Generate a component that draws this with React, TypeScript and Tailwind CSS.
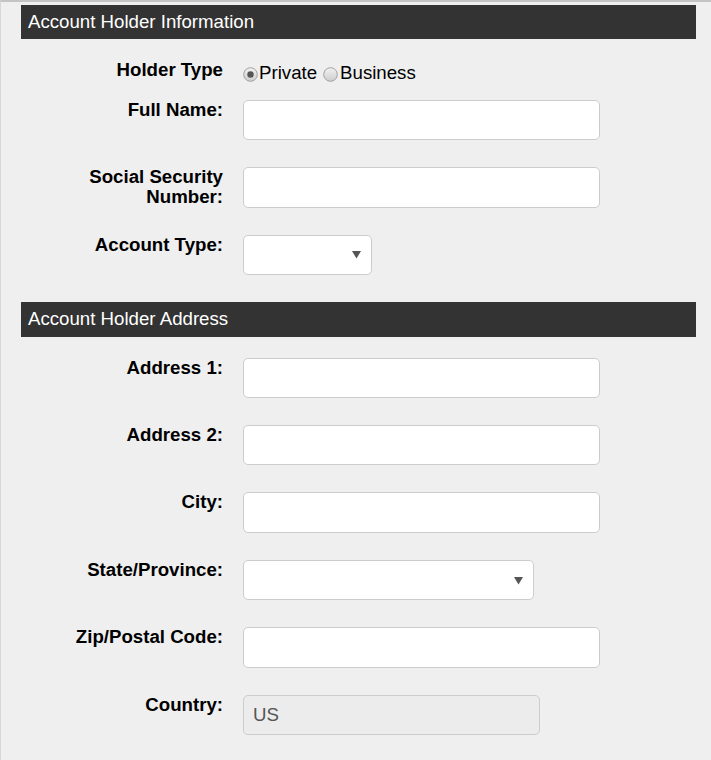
import React from 'react';

const font = { fontFamily: '"Liberation Sans", Arial, sans-serif' };

const Header = ({ title, className = '' }: { title: string; className?: string }) => (
  <div className={`flex h-[34.5px] items-center bg-[#333333] pl-[7px] text-[18.67px] text-white ${className}`}>
    {title}
  </div>
);

const Radio = ({ checked }: { checked?: boolean }) => (
  <svg width="15" height="15" viewBox="0 0 15 15" className="mt-[3px] shrink-0">
    <defs>
      <linearGradient id={checked ? 'rg1' : 'rg2'} x1="0" y1="0" x2="0" y2="1">
        <stop offset="0" stopColor="#f2f2f2" />
        <stop offset="1" stopColor="#cdcdcd" />
      </linearGradient>
    </defs>
    <circle cx="7.5" cy="7.5" r="6.8" fill={`url(#${checked ? 'rg1' : 'rg2'})`} stroke="#a0a0a0" strokeWidth="1" />
    {checked && <circle cx="7.5" cy="7.5" r="3.2" fill="#555555" />}
  </svg>
);

const Label = ({ children }: { children: React.ReactNode }) => (
  <div className="w-[202px] shrink-0 text-right text-[18.67px] font-bold leading-[20px] text-black">
    {children}
  </div>
);

const TextInput = ({ width = 'w-[357px]', value, disabled }: { width?: string; value?: string; disabled?: boolean }) => (
  <div
    className={`${width} flex h-[40.4px] items-center rounded-[5px] border border-[#cccccc] px-[9px] text-[18.67px] text-[#555555] ${
      disabled ? 'bg-[#ececec]' : 'bg-white'
    }`}
  >
    {value}
  </div>
);

const SelectInput = ({ width }: { width: string }) => (
  <div className={`${width} flex h-[40.4px] items-center justify-end rounded-[5px] border border-[#cccccc] bg-white pr-[10px]`}>
    <svg width="9" height="9" viewBox="0 0 9 9">
      <path d="M0 1 L9 1 L4.5 8.5 Z" fill="#555555" />
    </svg>
  </div>
);

const Row = ({ label, children, last }: { label: React.ReactNode; children: React.ReactNode; last?: boolean }) => (
  <div className={`flex gap-[20px] ${last ? '' : 'mb-[27px]'}`}>
    <Label>{label}</Label>
    {children}
  </div>
);

export default function App() {
  return (
    <div style={font} className="min-h-screen border-l border-t-2 border-l-[#d8d8d8] border-t-[#c4c4c4] bg-[#efefef] pb-[40px] pl-[20px] pr-[15px] pt-[3px]">
      <Header title="Account Holder Information" className="-mt-[0.5px]" />

      <div className="mt-[21px] flex h-[40px] gap-[20px]">
        <Label>Holder Type</Label>
        <div className="mt-[3px] flex h-[20px] items-center text-[18.67px] leading-[20px] text-black">
          <Radio checked />
          <span className="ml-[1px]">Private</span>
          <span className="ml-[6px]" />
          <Radio />
          <span className="ml-[2px]">Business</span>
        </div>
      </div>

      <Row label="Full Name:">
        <TextInput />
      </Row>
      <Row label={<>Social Security<br />Number:</>}>
        <TextInput />
      </Row>
      <Row label="Account Type:" last>
        <SelectInput width="w-[129px]" />
      </Row>

      <Header title="Account Holder Address" className="mt-[27px] mb-[21px]" />

      <Row label="Address 1:">
        <TextInput />
      </Row>
      <Row label="Address 2:">
        <TextInput />
      </Row>
      <Row label="City:">
        <TextInput />
      </Row>
      <Row label="State/Province:">
        <SelectInput width="w-[291px]" />
      </Row>
      <Row label="Zip/Postal Code:">
        <TextInput />
      </Row>
      <Row label="Country:" last>
        <TextInput width="w-[297px]" value="US" disabled />
      </Row>
    </div>
  );
}
